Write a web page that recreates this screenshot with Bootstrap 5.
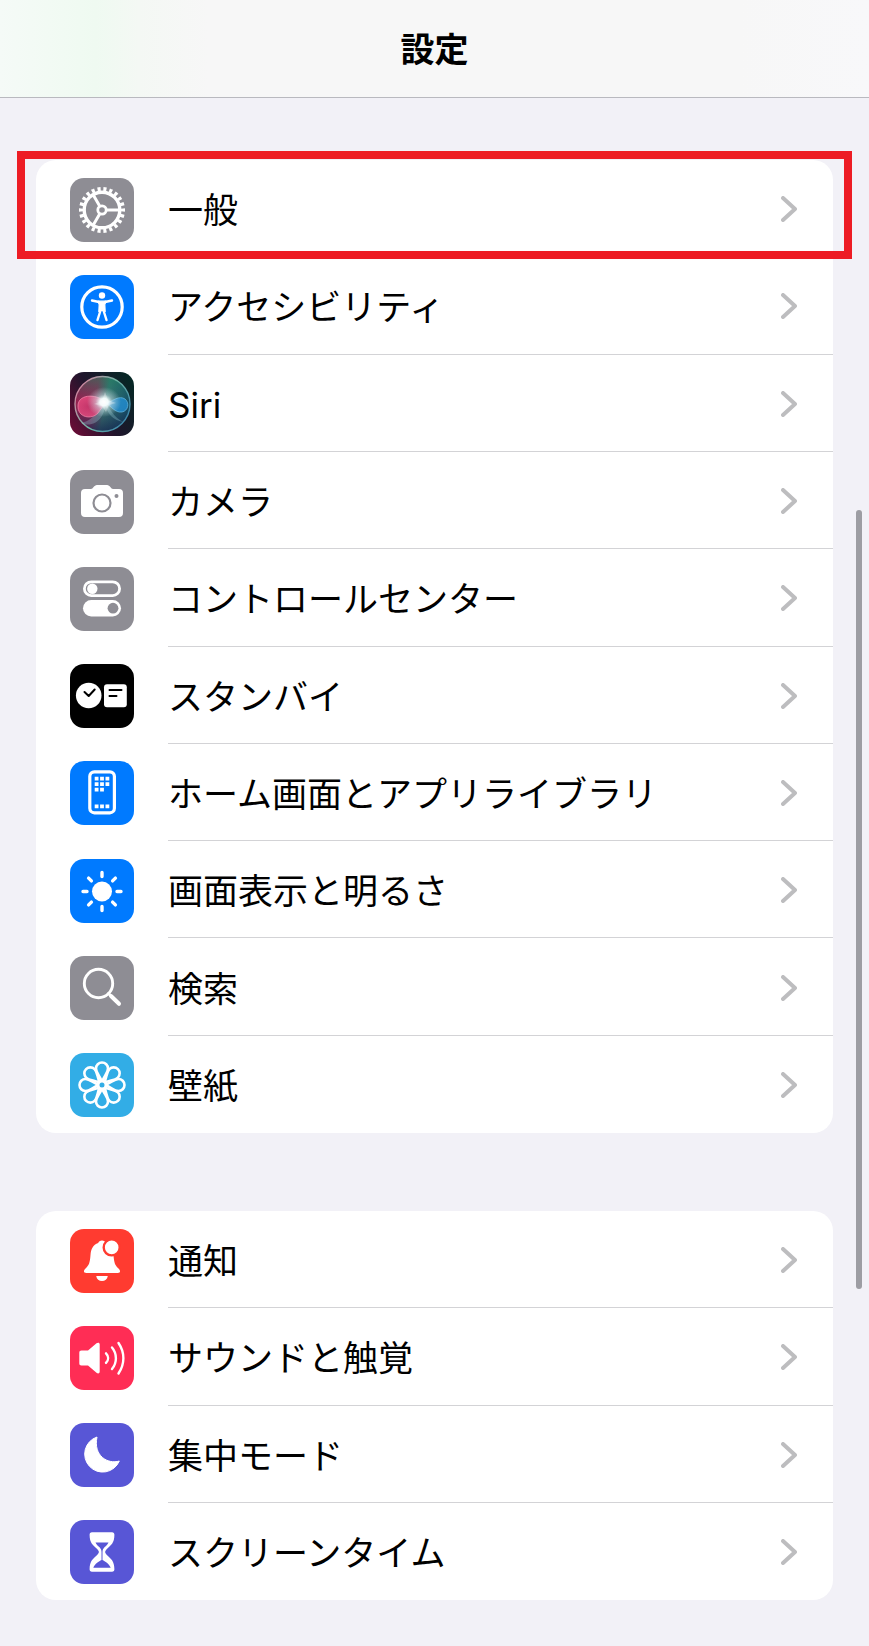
<!DOCTYPE html>
<html lang="ja">
<head>
<meta charset="utf-8">
<meta name="viewport" content="width=device-width, initial-scale=1">
<title>設定</title>
<link href="https://cdn.jsdelivr.net/npm/bootstrap@5.3.0/dist/css/bootstrap.min.css" rel="stylesheet">
<style>
body{background:#f2f1f7;color:#000;font-family:Inter,"Noto Sans CJK JP",sans-serif}
.app-bar{height:98px;padding-top:2px;border-bottom:1px solid #b9b9bf;background:linear-gradient(90deg,#f5faf7 0,#effaf1 11%,#f4f8f4 16%,#f7f7f7 24%,#f7f7f7 85%,#f8f8fa 100%)}
.app-bar h1{font-size:34px;line-height:48px;font-weight:700}
.page{padding:62px 36px 46px}
.settings{display:grid;grid-auto-rows:1fr;border-radius:20px;background:#fff}
.settings.main-group{min-height:973px}
.settings.sub-group{min-height:389px;margin-top:78px}
.settings a{color:#000;font-size:35px;line-height:48px;padding:2px 0 0 34px}
.settings .tile{width:64px;height:64px;border-radius:14px;margin-right:34px}
.settings .line{border-bottom:1px solid #d3d3d6;padding-right:36px}
.settings .line span{padding-top:2px}
.settings li:last-child .line{border-bottom-color:transparent}
.chev{width:16px;height:26px;fill:none;stroke:#bdbdbf;stroke-width:4;stroke-linecap:round;stroke-linejoin:round}
.callout-box{position:absolute;inset:-9px -19px -2px;border:8px solid #ed1c24;z-index:2;pointer-events:none}
.scroll-thumb{position:fixed;top:31vh;bottom:357px;right:7px;width:6px;border-radius:3px;background:#9d9da3}
.gray{background:#8e8d94}.blue{background:#007aff}.cyan{background:#32ade6}.red{background:#ff3b30}.pink{background:#ff2d55}.indigo{background:#5856d6}
</style>
</head>
<body>
<header class="app-bar d-flex align-items-center justify-content-center"><h1 class="m-0">設定</h1></header>
<main class="page">
<ul class="settings main-group list-unstyled mb-0">
<li class="d-flex position-relative"><a href="#" class="d-flex flex-fill align-items-center text-decoration-none">
<svg class="tile gray flex-shrink-0" viewBox="0 0 64 64" fill="none" stroke="#fff"><circle cx="32" cy="32" r="17.800" stroke-width="3.400"/><circle cx="32" cy="32" r="21" stroke-width="4" pathLength="88" stroke-dasharray="2.1 1.9" stroke-dashoffset="1.050"/><circle cx="32" cy="32" r="4.200" stroke-width="2.800"/><path stroke-width="3" d="M36.500 32H50M29.800 28.200 23 16.400M29.800 35.800 23 47.600"/></svg>
<span class="line d-flex flex-fill align-self-stretch align-items-center justify-content-between"><span>一般</span><svg class="chev" viewBox="0 0 16 26"><path d="M2 2 14 13 2 24"/></svg></span></a><div class="callout-box"></div></li>
<li class="d-flex"><a href="#" class="d-flex flex-fill align-items-center text-decoration-none">
<svg class="tile blue flex-shrink-0" viewBox="0 0 64 64" fill="none" stroke="#fff" stroke-linecap="round" stroke-linejoin="round"><circle cx="32" cy="32" r="20.200" stroke-width="3.200"/><circle cx="32" cy="20.500" r="3.200" fill="#fff" stroke="none"/><path stroke-width="2.400" d="M22 25.500 29 27M42 25.500 35 27M27.500 45 30.500 35.500M36.500 45 33.500 35.500"/><path fill="#fff" stroke-width="1.200" d="M28 26.200h8l-1.200 3.300.4 7h-1.600L32 34l-1.600 2.500h-1.600l.4-7z"/></svg>
<span class="line d-flex flex-fill align-self-stretch align-items-center justify-content-between"><span>アクセシビリティ</span><svg class="chev" viewBox="0 0 16 26"><path d="M2 2 14 13 2 24"/></svg></span></a></li>
<li class="d-flex"><a href="#" class="d-flex flex-fill align-items-center text-decoration-none">
<svg class="tile flex-shrink-0" viewBox="0 0 64 64"><defs>
<linearGradient id="sBack" x1="0" y1=".8" x2="1" y2=".2"><stop offset="0" stop-color="#650d35"/><stop offset=".45" stop-color="#20152c"/><stop offset="1" stop-color="#062725"/></linearGradient>
<linearGradient id="sOrb" x1="0" y1=".4" x2="1" y2=".6"><stop offset="0" stop-color="#96204f"/><stop offset=".35" stop-color="#8d3357"/><stop offset=".55" stop-color="#3c7a72"/><stop offset="1" stop-color="#114c66"/></linearGradient>
<linearGradient id="sShade" x1="0" y1="0" x2="0" y2="1"><stop offset="0" stop-color="#16805a" stop-opacity=".55"/><stop offset=".45" stop-color="#145a60" stop-opacity="0"/><stop offset=".6" stop-color="#171745" stop-opacity=".1"/><stop offset="1" stop-color="#131d4c" stop-opacity=".7"/></linearGradient>
<linearGradient id="sRim" x1="0" y1=".2" x2="1" y2=".8"><stop offset="0" stop-color="#d8819f"/><stop offset=".5" stop-color="#70b5a5"/><stop offset="1" stop-color="#3680a8"/></linearGradient>
<radialGradient id="sPink" cx=".4"><stop offset="0" stop-color="#d3376f"/><stop offset="1" stop-color="#ee4f84"/></radialGradient>
<radialGradient id="sGlow"><stop offset="0" stop-color="#fff"/><stop offset=".25" stop-color="#f4ffff" stop-opacity=".95"/><stop offset=".5" stop-color="#d0e4ea" stop-opacity=".5"/><stop offset="1" stop-color="#c5dfe5" stop-opacity="0"/></radialGradient></defs>
<path fill="url(#sBack)" d="M0 0h64v64H0z"/><circle cx="32.500" cy="32" r="27.500" fill="url(#sOrb)"/><circle cx="32.500" cy="32" r="27.500" fill="url(#sShade)" stroke="url(#sRim)" stroke-width="1.400"/>
<path fill="#9ed3de" fill-opacity=".3" d="M35 31c-8 5-9 17-24 20 14 6 25-7 24-20 2 11 8 17 18 19-9-5-12-12-18-19z"/>
<path fill="url(#sPink)" fill-opacity=".8" stroke="#f28bad" stroke-width=".7" d="M36 31C29 22 9 21 8 33c-1 13 14 15 20 8 3-4 5-7 8-10z"/>
<path fill="#2493db" fill-opacity=".75" stroke="#65bbe7" stroke-width=".7" d="M36 31c7-2 13-8 19-4 5 4 3 12-3 13-7 1-11-6-16-9z"/>
<ellipse cx="34" cy="30" rx="17" ry="15" fill="url(#sGlow)"/><path fill="#fff" d="m35 20 3 8 8 3-7 2-3 7-4-6-8-2 8-3z" fill-opacity=".3"/></svg>
<span class="line d-flex flex-fill align-self-stretch align-items-center justify-content-between"><span>Siri</span><svg class="chev" viewBox="0 0 16 26"><path d="M2 2 14 13 2 24"/></svg></span></a></li>
<li class="d-flex"><a href="#" class="d-flex flex-fill align-items-center text-decoration-none">
<svg class="tile gray flex-shrink-0" viewBox="0 0 64 64"><path fill="#fff" d="M15 19h6c2 0 3-4 6-4h10c3 0 4 4 6 4h6a4 4 0 0 1 4 4v20a4 4 0 0 1-4 4H15a4 4 0 0 1-4-4V23a4 4 0 0 1 4-4z"/><circle cx="32" cy="33" r="8.500" fill="none" stroke="#8e8d94" stroke-width="2.200"/><circle cx="46.500" cy="26" r="2" fill="#8e8d94"/></svg>
<span class="line d-flex flex-fill align-self-stretch align-items-center justify-content-between"><span>カメラ</span><svg class="chev" viewBox="0 0 16 26"><path d="M2 2 14 13 2 24"/></svg></span></a></li>
<li class="d-flex"><a href="#" class="d-flex flex-fill align-items-center text-decoration-none">
<svg class="tile gray flex-shrink-0" viewBox="0 0 64 64"><rect x="14.400" y="14.800" width="35.200" height="13.800" rx="6.900" fill="none" stroke="#fff" stroke-width="2.800"/><circle cx="22.300" cy="21.700" r="5.200" fill="#fff"/><rect x="13" y="33" width="38" height="16.500" rx="8.250" fill="#fff"/><circle cx="43" cy="41.200" r="5.400" fill="#8e8d94"/></svg>
<span class="line d-flex flex-fill align-self-stretch align-items-center justify-content-between"><span>コントロールセンター</span><svg class="chev" viewBox="0 0 16 26"><path d="M2 2 14 13 2 24"/></svg></span></a></li>
<li class="d-flex"><a href="#" class="d-flex flex-fill align-items-center text-decoration-none">
<svg class="tile bg-black flex-shrink-0" viewBox="0 0 64 64"><g fill="#fff"><circle cx="18.700" cy="31.500" r="12.800"/><rect x="34" y="20.300" width="22.800" height="23" rx="3"/></g><path d="m14.500 28 4.200 4 6-6.500M39.500 26h12M39.500 32h7" fill="none" stroke="#000" stroke-width="2" stroke-linecap="round" stroke-linejoin="round"/></svg>
<span class="line d-flex flex-fill align-self-stretch align-items-center justify-content-between"><span>スタンバイ</span><svg class="chev" viewBox="0 0 16 26"><path d="M2 2 14 13 2 24"/></svg></span></a></li>
<li class="d-flex"><a href="#" class="d-flex flex-fill align-items-center text-decoration-none">
<svg class="tile blue flex-shrink-0" viewBox="0 0 64 64"><rect x="19.800" y="10.800" width="24.600" height="41" rx="4.500" fill="none" stroke="#fff" stroke-width="3.200"/><path fill="none" stroke="#fff" stroke-width="3.800" stroke-dasharray="3.800 1.600" d="M24.700 17.700h14.600M24.700 23.200h14.600M24.700 28.700h9.200M24.700 45.300h14.600"/></svg>
<span class="line d-flex flex-fill align-self-stretch align-items-center justify-content-between"><span>ホーム画面とアプリライブラリ</span><svg class="chev" viewBox="0 0 16 26"><path d="M2 2 14 13 2 24"/></svg></span></a></li>
<li class="d-flex"><a href="#" class="d-flex flex-fill align-items-center text-decoration-none">
<svg class="tile blue flex-shrink-0" viewBox="0 0 64 64"><circle cx="32" cy="32.500" r="10" fill="#fff"/><path fill="none" stroke="#fff" stroke-width="3.400" stroke-linecap="round" d="M32 17.500v-4M32 47.500v4M17 32.500h-4M47 32.500h4M21.400 21.900l-2.800-2.800M42.600 21.900l2.800-2.800M21.400 43.100l-2.800 2.800M42.600 43.100l2.800 2.800"/></svg>
<span class="line d-flex flex-fill align-self-stretch align-items-center justify-content-between"><span>画面表示と明るさ</span><svg class="chev" viewBox="0 0 16 26"><path d="M2 2 14 13 2 24"/></svg></span></a></li>
<li class="d-flex"><a href="#" class="d-flex flex-fill align-items-center text-decoration-none">
<svg class="tile gray flex-shrink-0" viewBox="0 0 64 64" fill="none" stroke="#fff" stroke-linecap="round"><circle cx="28.500" cy="27.500" r="14.200" stroke-width="2.900"/><path stroke-width="2.900" d="m38.500 37.500 4 4"/><path stroke-width="4" d="m41 40 8 7.800"/></svg>
<span class="line d-flex flex-fill align-self-stretch align-items-center justify-content-between"><span>検索</span><svg class="chev" viewBox="0 0 16 26"><path d="M2 2 14 13 2 24"/></svg></span></a></li>
<li class="d-flex"><a href="#" class="d-flex flex-fill align-items-center text-decoration-none">
<svg class="tile cyan flex-shrink-0" viewBox="-32 -32 64 64" fill="none" stroke="#fff" stroke-width="2.600"><defs><path id="petal" d="M0-3C-2-9-6-12-6-16.500a6 6 0 0 1 12 0C6-12 2-9 0-3z"/></defs><use href="#petal"/><use href="#petal" transform="rotate(45)"/><use href="#petal" transform="rotate(90)"/><use href="#petal" transform="rotate(135)"/><use href="#petal" transform="rotate(180)"/><use href="#petal" transform="rotate(225)"/><use href="#petal" transform="rotate(270)"/><use href="#petal" transform="rotate(315)"/><circle r="3.500" fill="#32ade6" stroke-width="2"/></svg>
<span class="line d-flex flex-fill align-self-stretch align-items-center justify-content-between"><span>壁紙</span><svg class="chev" viewBox="0 0 16 26"><path d="M2 2 14 13 2 24"/></svg></span></a></li>
</ul>
<ul class="settings sub-group list-unstyled mb-0">
<li class="d-flex"><a href="#" class="d-flex flex-fill align-items-center text-decoration-none">
<svg class="tile red flex-shrink-0" viewBox="0 0 64 64"><path fill="#fff" d="M32 11.500c-2 0-3.300 1-3.800 2.500-5.200 1.800-7.200 6-7.700 12-.6 8-1.600 10-4.500 13-2 2-2.300 3-1.800 4 .3.700 1 .9 1.800.9h32c.8 0 1.500-.2 1.800-.9.500-1 .2-2-1.800-4-2.900-3-3.900-5-4.500-13-.4-6-2-10.200-7.700-12-.5-1.500-1.800-2.500-3.800-2.500zM26.200 47h11.600c-.5 3.300-2.800 5-5.800 5s-5.300-1.700-5.800-5z"/><circle cx="41.700" cy="18.400" r="8" fill="#fff" stroke="#ff3b30" stroke-width="2.400"/></svg>
<span class="line d-flex flex-fill align-self-stretch align-items-center justify-content-between"><span>通知</span><svg class="chev" viewBox="0 0 16 26"><path d="M2 2 14 13 2 24"/></svg></span></a></li>
<li class="d-flex"><a href="#" class="d-flex flex-fill align-items-center text-decoration-none">
<svg class="tile pink flex-shrink-0" viewBox="0 0 64 64"><path fill="#fff" d="M11.500 24.500H18l8.500-7.200c1.500-1.200 3.200-.8 3.200 1.200v27c0 2-1.700 2.400-3.200 1.200L18 39.500h-6.500c-1.500 0-2.200-.8-2.200-2.200V26.700c0-1.400.7-2.200 2.200-2.200z"/><path fill="none" stroke="#fff" stroke-width="2.400" stroke-linecap="round" d="M36 27.300c2.800 2.900 2.800 6.700 0 9.600M42 21.500c5.200 6.200 5.200 15.300 0 21.500M48.500 17c6.500 9.500 6.500 21 0 30.500"/></svg>
<span class="line d-flex flex-fill align-self-stretch align-items-center justify-content-between"><span>サウンドと触覚</span><svg class="chev" viewBox="0 0 16 26"><path d="M2 2 14 13 2 24"/></svg></span></a></li>
<li class="d-flex"><a href="#" class="d-flex flex-fill align-items-center text-decoration-none">
<svg class="tile indigo flex-shrink-0" viewBox="0 0 64 64"><path fill="#fff" stroke="#fff" stroke-linejoin="round" d="M27 14a18 18 0 1 0 22.300 24C38 41.500 23 33 27 14z"/></svg>
<span class="line d-flex flex-fill align-self-stretch align-items-center justify-content-between"><span>集中モード</span><svg class="chev" viewBox="0 0 16 26"><path d="M2 2 14 13 2 24"/></svg></span></a></li>
<li class="d-flex"><a href="#" class="d-flex flex-fill align-items-center text-decoration-none">
<svg class="tile indigo flex-shrink-0" viewBox="0 0 64 64"><path fill="#fff" d="M22 12.300h20c1.600 0 2.400.9 2.400 2.400 0 8.300-3.400 10.300-7 13.800-3 2.900-3 4.100 0 7 3.600 3.500 7 5.500 7 13.800 0 1.500-.8 2.400-2.400 2.400H22c-1.600 0-2.400-.9-2.400-2.400 0-8.300 3.400-10.300 7-13.800 3-2.900 3-4.100 0-7-3.600-3.500-7-5.500-7-13.800 0-1.500.8-2.400 2.400-2.400z"/><path fill="#5856d6" d="M25.500 22.500h13c-1 2.300-2.500 3.300-3.800 4.600-1.500 1.500-2.200 3-2.200 4.900v8c2.500 1.500 6.500 3.500 8.200 7.800H23.300c1.700-4.300 5.700-6.300 8.200-7.800v-8c0-1.900-.7-3.400-2.200-4.900-1.300-1.300-2.800-2.300-3.800-4.600z"/></svg>
<span class="line d-flex flex-fill align-self-stretch align-items-center justify-content-between"><span>スクリーンタイム</span><svg class="chev" viewBox="0 0 16 26"><path d="M2 2 14 13 2 24"/></svg></span></a></li>
</ul>
</main>
<div class="scroll-thumb" aria-hidden="true"></div>
<script src="https://cdn.jsdelivr.net/npm/bootstrap@5.3.0/dist/js/bootstrap.bundle.min.js"></script>
</body>
</html>
